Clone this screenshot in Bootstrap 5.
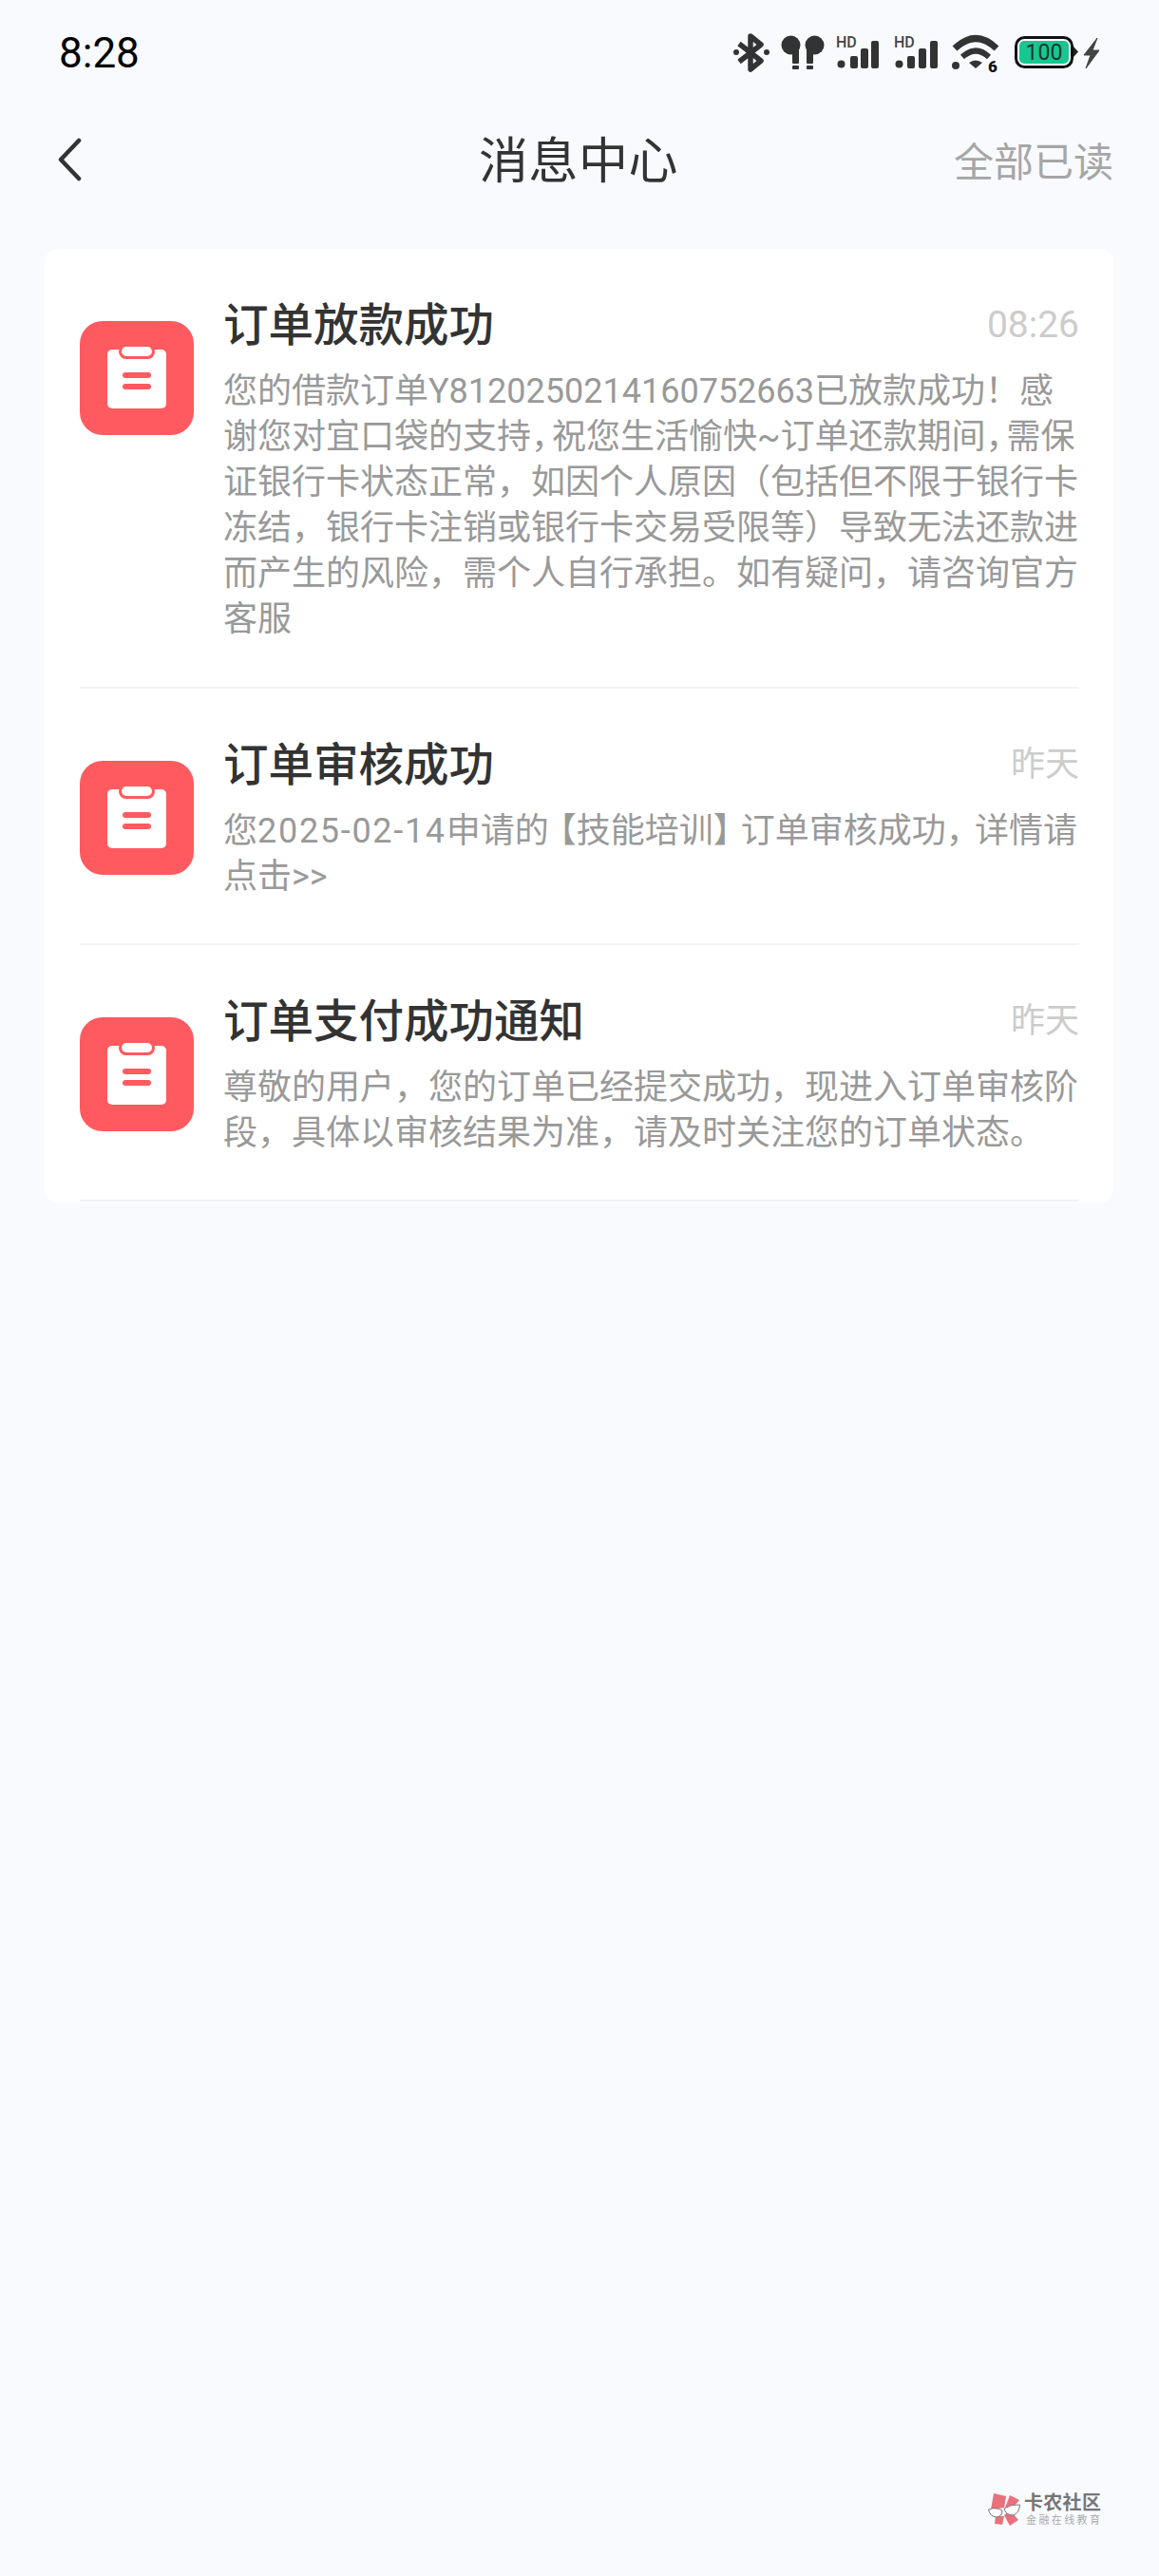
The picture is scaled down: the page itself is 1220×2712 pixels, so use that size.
<!DOCTYPE html>
<html lang="zh-CN">
<head>
    <meta charset="UTF-8">
    <meta name="viewport" content="width=device-width, initial-scale=1.0">
    <title>消息中心</title>
    <link href="https://cdn.jsdelivr.net/npm/bootstrap@5.3.0/dist/css/bootstrap.min.css" rel="stylesheet">
    <style>
        body {
            background: #f9fafe;
            font-family: "Noto Sans CJK SC", "Noto Sans", sans-serif;
            height: 2712px;
            position: relative;
            color: #333;
        }
        .status-bar { height: 112px; padding: 0 62px 0 62px; }
        .status-time { font-family: Roboto, sans-serif; font-size: 44px; font-weight: 400; color: #000; line-height: 1; }
        .status-icons svg { display: block; }
        .top-bar { height: 112px; padding: 0 48px 0 60px; position: relative; }
        .top-title { font-size: 52px; line-height: 1; position: absolute; left: 504px; letter-spacing: 0.5px; top: 28px; }
        .top-action { font-size: 42px; line-height: 1; color: #a6a6a6; }
        .msg-panel { margin: 38px 48px 0 47px; background: #fff; border-radius: 14px; padding: 0 36px 0 37px; height: 1004px; }
        .msg-item { border-bottom: 2px solid #f1f2f4; padding-top: 45px; gap: 31px; }
        .msg-first { height: 463px; }
        .msg-short { height: 270px; }
        .msg-icon { width: 120px; height: 120px; flex: none; margin-top: 31px; display: block; }
        .msg-title { font-size: 47.5px; line-height: 64px; color: #333; font-weight: 500; margin: 0; }
        .msg-time { font-family: Roboto, "Noto Sans CJK SC", sans-serif; font-size: 36px; color: #ccc; line-height: 64px; margin-top: 3px; }
        .msg-clock { font-size: 39px; }
        .msg-body { font-family: Roboto, "Noto Sans CJK SC", sans-serif; font-size: 36px; line-height: 48px; color: #999; margin: 14px 0 0; }
        .date-num { letter-spacing: 1.7px; }
        .comma-tight { letter-spacing: -14px; }
        .comma-slim { letter-spacing: -6px; }
        .br-lead, .br-close { letter-spacing: -7px; }
        .watermark { position: absolute; left: 1040px; top: 2622px; }
        .wm-name { font-size: 20px; line-height: 22px; font-weight: 700; color: #767676; margin-left: 2px; letter-spacing: 0.3px; }
        .wm-sub { font-size: 11px; line-height: 14px; color: #aaa; letter-spacing: 2.4px; margin-left: 4px; }
    </style>
</head>
<body>
    <div class="status-bar d-flex justify-content-between align-items-center">
        <span class="status-time">8:28</span>
        <div class="status-icons d-flex align-items-center">
            <svg width="386" height="56" viewBox="772 28 386 56" xmlns="http://www.w3.org/2000/svg" fill="#333">
                <!-- bluetooth -->
                <path d="M778 46 L801 64 L790 73 V38 L801 47 L778 65" fill="none" stroke="#333" stroke-width="5.500" stroke-linejoin="round"/>
                <circle cx="775" cy="55" r="3"/><circle cx="807" cy="55" r="3"/>
                <!-- earbuds -->
                <circle cx="832.500" cy="47.500" r="10"/><circle cx="857.500" cy="47.500" r="10"/>
                <rect x="834" y="50" width="7" height="17" rx="1"/><rect x="849" y="50" width="7" height="17" rx="1"/>
                <rect x="834" y="69" width="7" height="4" rx="1"/><rect x="849" y="69" width="7" height="4" rx="1"/>
                <!-- signal 1 -->
                <text x="880" y="50" font-family="Roboto, sans-serif" font-size="16" font-weight="500" fill="#444">HD</text>
                <circle cx="885.500" cy="67.500" r="4"/>
                <rect x="895" y="59" width="8" height="13" rx="2"/><rect x="906" y="51" width="8" height="21" rx="2"/><rect x="917" y="43" width="8" height="29" rx="2"/>
                <!-- signal 2 -->
                <text x="941" y="50" font-family="Roboto, sans-serif" font-size="16" font-weight="500" fill="#444">HD</text>
                <circle cx="946.500" cy="67.500" r="4"/>
                <rect x="955" y="59" width="8" height="13" rx="2"/><rect x="967" y="51" width="8" height="21" rx="2"/><rect x="979" y="43" width="8" height="29" rx="2"/>
                <!-- wifi -->
                <path d="M1005 51 Q1027 30 1049 51" fill="none" stroke="#333" stroke-width="7"/>
                <path d="M1013 60 Q1027 47 1041 60" fill="none" stroke="#333" stroke-width="6"/>
                <path d="M1020 66 Q1027 61 1034 66 L1027 72 Z"/>
                <circle cx="1006" cy="69" r="4"/>
                <text x="1040" y="76" font-family="Roboto, sans-serif" font-size="17" font-weight="900" fill="#111">6</text>
                <!-- battery -->
                <rect x="1069.500" y="39.500" width="59" height="31" rx="9" fill="#fff" stroke="#111" stroke-width="3"/>
                <rect x="1073" y="43" width="52" height="24" rx="5" fill="#18c690"/>
                <text x="1099" y="63" text-anchor="middle" font-family="Roboto, sans-serif" font-size="23" fill="#0c3b2c">100</text>
                <path d="M1130 49 L1135 54.500 L1130 60 Z" fill="#222"/>
                <!-- charging bolt -->
                <path d="M1155 40 L1141 58 L1148 58 L1143 72 L1157 53 L1150 53 Z" fill="#444" stroke="#444" stroke-width="1"/>
            </svg>
        </div>
    </div>

    <div class="top-bar d-flex justify-content-between align-items-center">
        <svg width="28" height="46" viewBox="0 0 28 46" xmlns="http://www.w3.org/2000/svg"><path d="M23 3 L4 23 L23 43" fill="none" stroke="#333" stroke-width="4.500" stroke-linecap="round" stroke-linejoin="round"/></svg>
        <span class="top-title">消息中心</span>
        <span class="top-action">全部已读</span>
    </div>

    <div class="msg-panel">
        <div class="msg-item msg-first d-flex">
            <svg class="msg-icon" viewBox="0 0 120 120" xmlns="http://www.w3.org/2000/svg"><use href="#clip"/></svg>
            <div class="flex-grow-1">
                <div class="d-flex justify-content-between">
                    <h5 class="msg-title">订单放款成功</h5>
                    <span class="msg-time msg-clock">08:26</span>
                </div>
                <div class="msg-body">
                    <div>您的借款订单Y8120250214160752663已放款成功！感</div>
                    <div>谢您对宜口袋的支持<span class="comma-tight">，</span>祝您生活愉快~订单还款期间<span class="comma-tight">，</span>需保</div>
                    <div>证银行卡状态正常，如因个人原因（包括但不限于银行卡冻结，银行卡注销或银行卡交易受限等）导致无法还款进而产生的风险，需个人自行承担。如有疑问，请咨询官方客服</div>
                </div>
            </div>
        </div>
        <div class="msg-item msg-short d-flex">
            <svg class="msg-icon" viewBox="0 0 120 120" xmlns="http://www.w3.org/2000/svg"><use href="#clip"/></svg>
            <div class="flex-grow-1">
                <div class="d-flex justify-content-between">
                    <h5 class="msg-title">订单审核成功</h5>
                    <span class="msg-time">昨天</span>
                </div>
                <div class="msg-body">
                    <div>您<span class="date-num">2025-02-14</span>申请<span class="br-lead">的</span>【技能培训<span class="br-close">】</span>订单审核成功<span class="comma-slim">，</span>详情请</div>
                    <div>点击&gt;&gt;</div>
                </div>
            </div>
        </div>
        <div class="msg-item msg-short d-flex">
            <svg class="msg-icon" viewBox="0 0 120 120" xmlns="http://www.w3.org/2000/svg"><use href="#clip"/></svg>
            <div class="flex-grow-1">
                <div class="d-flex justify-content-between">
                    <h5 class="msg-title">订单支付成功通知</h5>
                    <span class="msg-time">昨天</span>
                </div>
                <p class="msg-body">尊敬的用户，您的订单已经提交成功，现进入订单审核阶段，具体以审核结果为准，请及时关注您的订单状态。</p>
            </div>
        </div>
    </div>

    <svg width="0" height="0" class="position-absolute" xmlns="http://www.w3.org/2000/svg">
        <symbol id="clip" viewBox="0 0 120 120">
            <rect width="120" height="120" rx="24" fill="#ff5a5f"/>
            <rect x="29" y="30" width="62" height="62" rx="5" fill="#fff"/>
            <rect x="41" y="25" width="38" height="15" rx="7.500" fill="#ff5a5f"/>
            <rect x="44" y="27" width="32" height="10" rx="5" fill="#fff"/>
            <rect x="45" y="54" width="30" height="6" rx="3" fill="#ff5a5f"/>
            <rect x="45" y="66" width="30" height="6" rx="3" fill="#ff5a5f"/>
        </symbol>
    </svg>

    <div class="watermark d-flex align-items-center">
        <svg width="36" height="38" viewBox="0 0 36 38" xmlns="http://www.w3.org/2000/svg">
            <path d="M6 3 L19 6 L17 18 L3 20 Z M23 5 L33 10 L25 20 L18 18 Z M8 27 L17 27 L15 36 L7 35 Z M17 26 L23 21 L32 31 L23 37 Z" fill="#e9707c"/>
            <path d="M0.500 20 Q8 17 15 21 Q15 28 8 28 Q2 27 0.500 20 Z M17 19 Q25 14 33.500 15 Q33 24 26 26 Q19 26 17 19 Z" fill="#fff" stroke="#777" stroke-width="1"/>
        </svg>
        <div>
            <div class="wm-name">卡农社区</div>
            <div class="wm-sub">金融在线教育</div>
        </div>
    </div>

    <script src="https://cdn.jsdelivr.net/npm/bootstrap@5.3.0/dist/js/bootstrap.bundle.min.js"></script>
</body>
</html>
